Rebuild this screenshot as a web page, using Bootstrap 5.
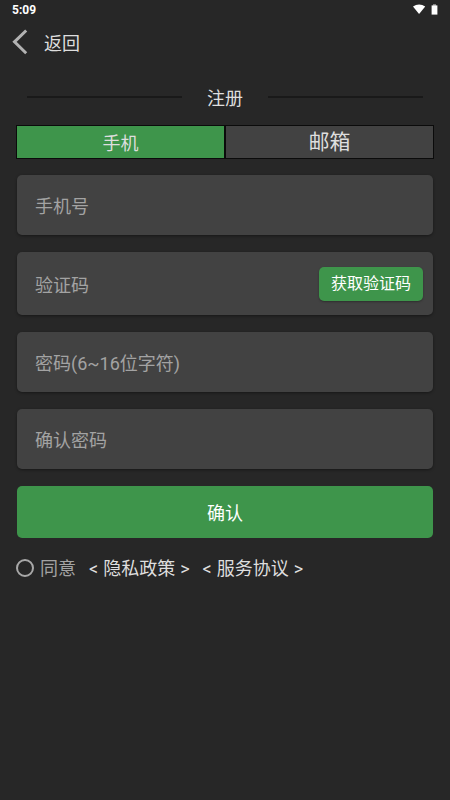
<!DOCTYPE html>
<html lang="zh-CN">
<head>
<meta charset="utf-8">
<meta name="viewport" content="width=device-width, initial-scale=1">
<title>注册</title>
<link href="https://cdn.jsdelivr.net/npm/bootstrap@5.3.0/dist/css/bootstrap.min.css" rel="stylesheet">
<style>
  body { background: #272727; color: #dedede; font-family: Roboto, "Noto Sans CJK SC", sans-serif; font-size: 18px; line-height: 24px; }
  .status-bar { height: 20px; padding: 0 12px; font-size: 12px; line-height: 20px; color: #fff; }
  .back-bar { height: 44px; padding: 0 12px; }
  .back-link { gap: 16px; color: #dedede; }
  .back-link span { padding-top: 3px; }
  .title-row { padding: 0 11px; gap: 25px; margin: 19px 0 14px; }
  .title-row h1 { font-size: 18px; line-height: 24px; font-weight: 400; padding-top: 4px; }
  .rule { height: 2px; background: #191919; }
  .page-body { padding: 0 16px; }
  .tab-strip { border: 1px solid #0b0b0b; height: 34px; }
  .tab-strip .btn { color: #dedede; background: #424242; font-size: 18px; line-height: 24px; }
  .tab-strip .btn.active { background: #3e954b; color: #dedede; border: 0; }
  .tab-strip .btn.tab-mail { font-size: 21px; }
  .tab-split { width: 2px; background: #0b0b0b; }
  .form-stack { gap: 17px; padding: 0 1px; margin-top: 16px; }
  .field { background: #424242; border-radius: 5px; box-shadow: 0 1px 3px rgba(0, 0, 0, .4); min-height: 60px; }
  .field-code { min-height: 63px; padding-right: 10px; }
  .field .form-control { color: #dedede; font-size: 18px; line-height: 24px; padding: 20px 18px 16px; min-width: 0; }
  .field .form-control::placeholder { color: #a3a3a3; opacity: 1; }
  .btn-green { --bs-btn-color: #fff; --bs-btn-bg: #3e954b; --bs-btn-hover-color: #fff; --bs-btn-hover-bg: #35833f; --bs-btn-border-width: 0; --bs-btn-border-radius: 5px; --bs-btn-font-size: 18px; --bs-btn-line-height: 24px; }
  .btn-code { width: 104px; height: 34px; font-size: 16px; box-shadow: 0 1px 2px rgba(0, 0, 0, .3); }
  .btn-confirm { height: 52px; padding: 4px 12px 0; }
  .agree-row { margin-top: 19px; gap: 13px; }
  .agree-row .form-check-input { width: 18px; height: 18px; margin: 0 6px 2px 0; background-color: transparent; border: 2px solid #a8a8a8; }
  .agree-row label { color: #a3a3a3; }
  .agree-row a { color: #dedede; gap: 5px; }
</style>
</head>
<body>
<div class="status-bar d-flex justify-content-between align-items-center">
  <span class="fw-bold">5:09</span>
  <span class="d-flex align-items-center">
    <svg width="26" height="12" viewBox="0 0 26 12" fill="#fff" aria-hidden="true"><path d="M1 2.6C4.8-.2 9.4-.2 13.2 2.6L7.1 10Z"/><path fill="#aaa" d="M21 .3h3v1.4h-3Z"/><path d="M19.6 1.4h5.8v9.2h-5.8Z"/></svg>
  </span>
</div>
<header class="back-bar d-flex align-items-center">
  <a href="#" class="back-link d-flex align-items-center text-decoration-none">
    <svg width="16" height="26" viewBox="0 0 16 26" fill="none" stroke="#b2b2b2" stroke-width="3" aria-hidden="true"><path d="M14.2 1.5 2.5 12.8 14.2 24.2"/></svg>
    <span>返回</span>
  </a>
</header>
<main class="page-body">
  <div class="title-row d-flex align-items-center">
    <span class="rule flex-fill"></span>
    <h1 class="mb-0">注册</h1>
    <span class="rule flex-fill"></span>
  </div>
  <div class="tab-strip d-flex" role="tablist">
    <button type="button" class="btn active w-50 rounded-0 p-0 pt-1" role="tab" aria-selected="true">手机</button>
    <span class="tab-split flex-shrink-0" role="presentation"></span>
    <button type="button" class="btn tab-mail w-50 rounded-0 border-0 p-0" role="tab" aria-selected="false">邮箱</button>
  </div>
  <form class="form-stack d-flex flex-column">
    <div class="field d-flex align-items-center">
      <input type="tel" class="form-control bg-transparent border-0 shadow-none" placeholder="手机号" aria-label="手机号">
    </div>
    <div class="field field-code d-flex align-items-center">
      <input type="text" class="form-control bg-transparent border-0 shadow-none" placeholder="验证码" aria-label="验证码">
      <button type="button" class="btn btn-green btn-code flex-shrink-0 p-0">获取验证码</button>
    </div>
    <div class="field d-flex align-items-center">
      <input type="password" class="form-control bg-transparent border-0 shadow-none" placeholder="密码(6~16位字符)" aria-label="密码">
    </div>
    <div class="field d-flex align-items-center">
      <input type="password" class="form-control bg-transparent border-0 shadow-none" placeholder="确认密码" aria-label="确认密码">
    </div>
    <button type="submit" class="btn btn-green btn-confirm">确认</button>
  </form>
  <div class="agree-row d-flex align-items-center">
    <span class="d-flex align-items-center">
      <input class="form-check-input flex-shrink-0" type="radio" id="agree">
      <label for="agree">同意</label>
    </span>
    <a href="#" class="d-flex text-decoration-none"><span>&lt;</span><span>隐私政策</span><span>&gt;</span></a>
    <a href="#" class="d-flex text-decoration-none"><span>&lt;</span><span>服务协议</span><span>&gt;</span></a>
  </div>
</main>
<script src="https://cdn.jsdelivr.net/npm/bootstrap@5.3.0/dist/js/bootstrap.bundle.min.js"></script>
</body>
</html>
